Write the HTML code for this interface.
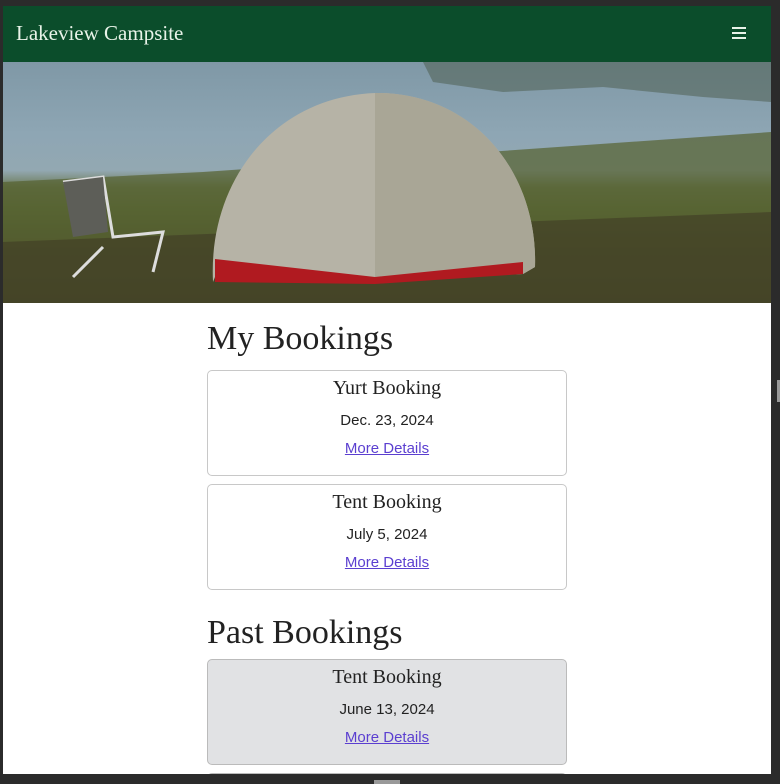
<!DOCTYPE html>
<html><head><meta charset="utf-8"><style>
*{margin:0;padding:0;box-sizing:border-box}
html,body{width:780px;height:784px;overflow:hidden}
body{background:#2b2b2b;position:relative;font-family:"Liberation Sans",sans-serif}
#page{position:absolute;left:3px;top:6px;width:768px;height:768px;background:#fff;overflow:hidden}
.nav{height:56px;background:#0b4d2b;color:#e8f3e8;position:relative}
.nav .brand{position:absolute;left:13px;top:15px;font-family:"Liberation Serif",serif;font-size:21px}
.nav .burger{position:absolute;left:729px;top:21px;width:14px}
.nav .burger i{display:block;height:2px;background:#e8f3e8;margin-bottom:3px}
.hero{height:241px;position:relative;overflow:hidden;background:linear-gradient(180deg,#7f98a6 0%,#8ea6b4 30%,#93a8b2 45%,#6b7a55 52%,#5b6a3a 62%,#4a4a2c 80%,#3a3524 100%)}
.main{position:absolute;left:204px;top:297px;width:360px}
h2{font-family:"Liberation Serif",serif;font-weight:normal;font-size:34px;color:#222;margin:17px 0 12px}
.card{border:1px solid #c8c8c8;border-radius:5px;height:106px;text-align:center;margin-bottom:8px}
.card.past{background:#e1e2e4;border-color:#bbb}
.card h3{font-family:"Liberation Serif",serif;font-weight:normal;font-size:20px;color:#222;margin-top:6px}
.card p{font-size:15px;color:#222;margin-top:12px}
.card a{display:block;font-size:15px;color:#5b3fd0;text-decoration:underline;margin-top:11px}
</style></head><body>
<div id="page">
<div class="nav"><div class="brand">Lakeview Campsite</div><div class="burger"><i></i><i></i><i></i></div></div>
<div class="hero">
<svg width="768" height="241" viewBox="0 0 768 241" style="position:absolute;left:0;top:0">
<path d="M420 0 L768 0 L768 40 L700 35 L600 25 L500 30 L430 20Z" fill="#4a5a4a" opacity=".5"/>
<path d="M0 120 L200 110 L768 70 L768 241 L0 241Z" fill="#56612f" opacity=".7"/>
<path d="M0 180 L768 150 L768 241 L0 241Z" fill="#3f3a25" opacity=".6"/>
<path d="M210 220 C205 120 270 35 372 31 C470 30 535 110 532 205 L520 212 L372 218 L212 215Z" fill="#b6b3a6"/>
<path d="M372 31 C470 30 535 110 532 205 L520 212 L372 218Z" fill="#a9a696"/>
<path d="M212 197 L372 215 L520 200 L520 212 L372 222 L212 220Z" fill="#b01a20"/>
<path d="M60 120 L100 115 L110 175 L160 170 L150 210 M70 215 L100 185" stroke="#ddd" stroke-width="3" fill="none"/>
<path d="M60 120 L100 115 L105 170 L70 175Z" fill="#5d5e58"/>
</svg>
</div>
<div class="main">
<h2>My Bookings</h2>
<div class="card"><h3>Yurt Booking</h3><p>Dec. 23, 2024</p><a>More Details</a></div>
<div class="card"><h3>Tent Booking</h3><p>July 5, 2024</p><a>More Details</a></div>
<h2 style="margin-top:24px;margin-bottom:7px">Past Bookings</h2>
<div class="card past"><h3>Tent Booking</h3><p>June 13, 2024</p><a>More Details</a></div>
<div class="card past"></div>
</div>
</div>
<div style="position:absolute;left:777px;top:380px;width:3px;height:22px;background:#999"></div>
<div style="position:absolute;left:374px;top:780px;width:26px;height:4px;background:#999"></div>
</body></html>
